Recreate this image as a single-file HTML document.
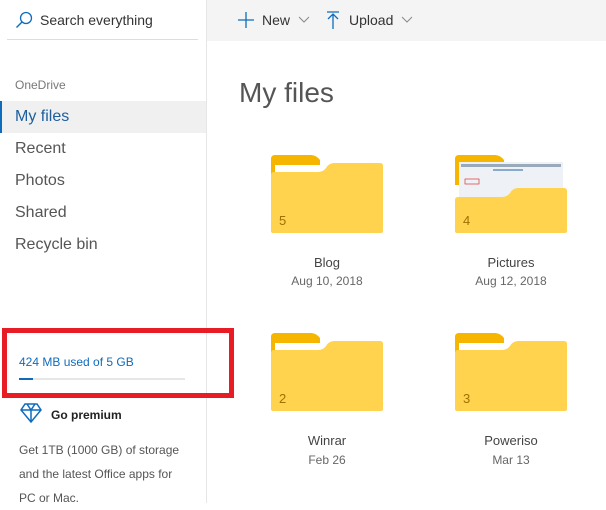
<!DOCTYPE html><html><head><style>
body{margin:0;width:606px;height:503px;overflow:hidden;font-family:"Liberation Sans",sans-serif;background:#fff;position:relative}
.a{position:absolute;white-space:nowrap}
.nav{font-size:16px;color:#555;left:15px}
.cap{font-size:13px;color:#444;text-align:center;width:160px}
.dt{font-size:12px;color:#666;text-align:center;width:160px}
</style></head><body>
<div class="a" style="left:207px;top:0;width:399px;height:41px;background:#f4f4f4"></div>
<div class="a" style="left:206px;top:0;width:1px;height:503px;background:#e6e6e6"></div>
<div class="a" style="left:7px;top:39px;width:191px;height:1px;background:#ddd"></div>
<svg class="a" style="left:15px;top:11px" width="18" height="18"><circle cx="11" cy="7" r="5.5" fill="none" stroke="#0f6cbd" stroke-width="1.3"/><path d="M7 11L1.5 16.5" stroke="#0f6cbd" stroke-width="1.4"/></svg>
<div class="a" style="left:40px;top:12px;font-size:14px;color:#333">Search everything</div>
<svg class="a" style="left:238px;top:12px" width="16" height="16"><path d="M8 0V16M0 8H16" stroke="#0f6cbd" stroke-width="1.3"/></svg>
<div class="a" style="left:262px;top:12px;font-size:14px;color:#333">New</div>
<svg class="a" style="left:298px;top:16px" width="12" height="8"><path d="M1 1L6 6L11 1" fill="none" stroke="#888"/></svg>
<svg class="a" style="left:326px;top:11px" width="14" height="18"><path d="M1 1H13M7 3V18M2 8L7 3L12 8" fill="none" stroke="#0f6cbd" stroke-width="1.3"/></svg>
<div class="a" style="left:349px;top:12px;font-size:14px;color:#333">Upload</div>
<svg class="a" style="left:401px;top:16px" width="12" height="8"><path d="M1 1L6 6L11 1" fill="none" stroke="#888"/></svg>
<div class="a" style="left:15px;top:78px;font-size:12px;color:#777">OneDrive</div>
<div class="a" style="left:0;top:101px;width:206px;height:32px;background:#f0f0f0"></div>
<div class="a" style="left:0;top:101px;width:2px;height:32px;background:#0f6cbd"></div>
<div class="a nav" style="top:108px;color:#1c5e9e">My files</div>
<div class="a nav" style="top:140px">Recent</div>
<div class="a nav" style="top:172px">Photos</div>
<div class="a nav" style="top:204px">Shared</div>
<div class="a nav" style="top:236px">Recycle bin</div>
<div class="a" style="left:239px;top:77px;font-size:28px;color:#555;font-weight:300">My files</div>
<div class="a" style="left:2px;top:328px;width:222px;height:60px;border:5px solid #e81c24"></div>
<div class="a" style="left:19px;top:355px;font-size:12px;color:#0f6cbd">424 MB used of 5 GB</div>
<div class="a" style="left:19px;top:378px;width:166px;height:2px;background:#e6e6e6"></div>
<div class="a" style="left:19px;top:378px;width:14px;height:2px;background:#0f6cbd"></div>
<svg class="a" style="left:20px;top:403px" width="22" height="20"><path d="M5 1H17L21 7L11 19L1 7Z M1 7H21 M7 1L11 7L15 1 M11 7V19" fill="none" stroke="#0f6cbd" stroke-width="1.5"/></svg>
<div class="a" style="left:51px;top:408px;font-size:12px;font-weight:bold;color:#222">Go premium</div>
<div class="a" style="left:19px;top:438px;font-size:12px;color:#555;line-height:24px">Get 1TB (1000 GB) of storage<br>and the latest Office apps for<br>PC or Mac.</div>

<svg width="0" height="0" style="position:absolute"><defs><g id="f"><path d="M0 4Q0 0 4 0H40Q45 0 49 5V30H0Z" fill="#f6b600"/><rect x="4" y="10" width="100" height="20" fill="#fff"/><path d="M0 78V20Q0 17 3 17H47Q52 17 55 13Q58 8 63 8H109Q112 8 112 11V76Q112 78 110 78H2Q0 78 0 76Z" fill="#ffd34e"/></g></defs></svg>
<svg class="a" style="left:271px;top:155px" width="113" height="80"><use href="#f"/><text x="8" y="70" font-size="13" fill="#a07000" font-family="Liberation Sans">5</text></svg>
<svg class="a" style="left:455px;top:155px" width="113" height="80"><path d="M0 4Q0 0 4 0H40Q45 0 49 5V30H0Z" fill="#f6b600"/><rect x="4" y="7" width="104" height="40" fill="#eef2f6"/><rect x="6" y="9" width="100" height="3" fill="#9ab"/><rect x="10" y="24" width="14" height="5" fill="none" stroke="#d33" stroke-width="0.7"/><rect x="38" y="14" width="30" height="2" fill="#8ac"/><path d="M0 78V45Q0 42 3 42H47Q52 42 55 38Q58 33 63 33H109Q112 33 112 36V76Q112 78 110 78H2Q0 78 0 76Z" fill="#ffd34e"/><text x="8" y="70" font-size="13" fill="#a07000" font-family="Liberation Sans">4</text></svg>
<svg class="a" style="left:271px;top:333px" width="113" height="80"><use href="#f"/><text x="8" y="70" font-size="13" fill="#a07000" font-family="Liberation Sans">2</text></svg>
<svg class="a" style="left:455px;top:333px" width="113" height="80"><use href="#f"/><text x="8" y="70" font-size="13" fill="#a07000" font-family="Liberation Sans">3</text></svg>

<div class="a cap" style="left:247px;top:255px">Blog</div>
<div class="a dt" style="left:247px;top:274px">Aug 10, 2018</div>
<div class="a cap" style="left:431px;top:255px">Pictures</div>
<div class="a dt" style="left:431px;top:274px">Aug 12, 2018</div>
<div class="a cap" style="left:247px;top:433px">Winrar</div>
<div class="a dt" style="left:247px;top:453px">Feb 26</div>
<div class="a cap" style="left:431px;top:433px">Poweriso</div>
<div class="a dt" style="left:431px;top:453px">Mar 13</div>
</body></html>
